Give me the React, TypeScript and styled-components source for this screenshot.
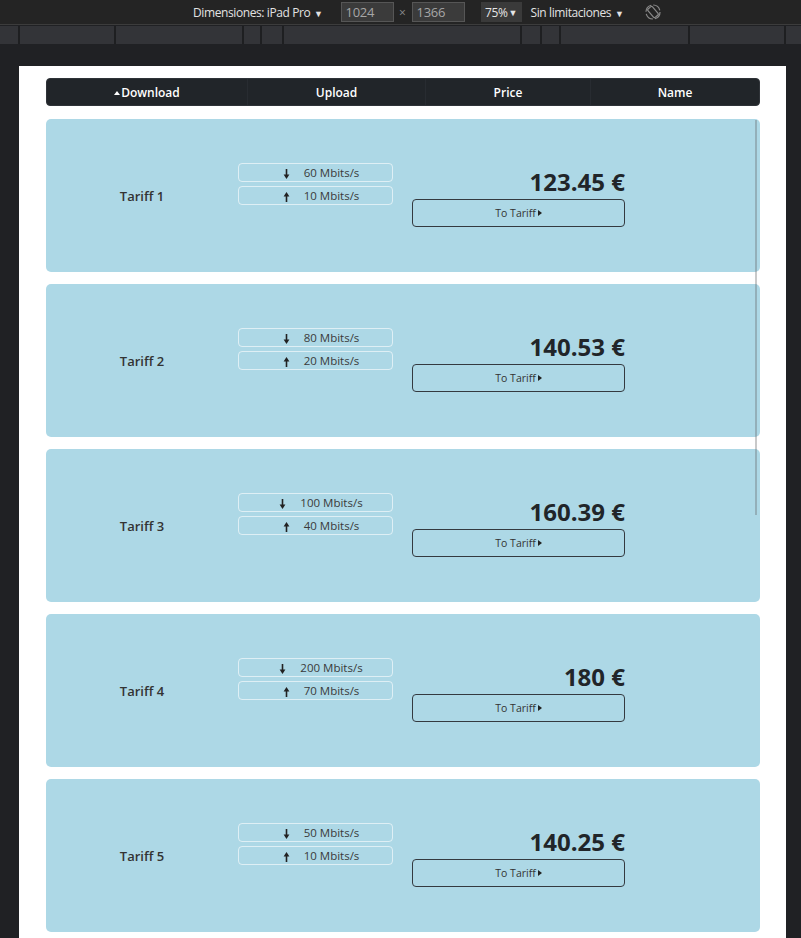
import styled, { createGlobalStyle } from "styled-components";

const tariffs = [
  { name: "Tariff 1", down: 60, up: 10, price: "123.45 €" },
  { name: "Tariff 2", down: 80, up: 20, price: "140.53 €" },
  { name: "Tariff 3", down: 100, up: 40, price: "160.39 €" },
  { name: "Tariff 4", down: 200, up: 70, price: "180 €" },
  { name: "Tariff 5", down: 50, up: 10, price: "140.25 €" },
];

// widths of the ruler segments under the device toolbar
const rulerSegments = [20, 96, 128, 18, 22, 238, 20, 19, 129, 96];

const columns = ["Download", "Upload", "Price", "Name"];

export default function App() {
  return (
    <>
      <GlobalStyle />
      <Toolbar>
        <ToolText>
          Dimensiones: iPad Pro <Caret>▼</Caret>
        </ToolText>
        <SizeInput style={{ marginLeft: 18 }}>1024</SizeInput>
        <Times>×</Times>
        <SizeInput>1366</SizeInput>
        <ZoomBox>
          75% <Caret>▼</Caret>
        </ZoomBox>
        <ToolText style={{ marginLeft: 9 }}>
          Sin limitaciones <Caret>▼</Caret>
        </ToolText>
        <RotateIcon />
      </Toolbar>
      <Ruler>
        {rulerSegments.map((w, i) => (
          <RulerSegment key={i} $width={w} />
        ))}
        <RulerRest />
      </Ruler>

      <Viewport>
        <Page>
          <TableHead>
            {columns.map((c, i) => (
              <HeadCell key={c} $first={i === 0}>
                {i === 0 && <SortUp />}
                {c}
              </HeadCell>
            ))}
          </TableHead>

          <CardList>
            {tariffs.map((t) => (
              <Card key={t.name}>
                <TariffName>{t.name}</TariffName>
                <Speeds>
                  <Speed>
                    <Arrow dir="down" />
                    <span>{t.down} Mbits/s</span>
                  </Speed>
                  <Speed>
                    <Arrow dir="up" />
                    <span>{t.up} Mbits/s</span>
                  </Speed>
                </Speeds>
                <PriceCol>
                  <Price>{t.price}</Price>
                  <TariffButton>
                    To Tariff
                    <PlayCaret />
                  </TariffButton>
                </PriceCol>
              </Card>
            ))}
            <ScrollThumb />
          </CardList>
        </Page>
      </Viewport>
    </>
  );
}

function Arrow({ dir }: { dir: "up" | "down" }) {
  return (
    <ArrowSvg width="7" height="10" viewBox="0 0 7 10" $up={dir === "up"}>
      <line x1="3.5" y1="0" x2="3.5" y2="6.5" stroke="#222" strokeWidth="1.6" />
      <polygon points="0.6,5.6 6.4,5.6 3.5,10" fill="#222" />
    </ArrowSvg>
  );
}

function RotateIcon() {
  return (
    <RotateSvg width="16" height="18" viewBox="0 0 16 18">
      <circle cx="8" cy="9" r="7" fill="none" stroke="#8a8a8a" strokeWidth="1.2" strokeDasharray="9 2" />
      <rect
        x="5"
        y="3.5"
        width="6"
        height="11"
        rx="1.2"
        fill="none"
        stroke="#8a8a8a"
        strokeWidth="1.2"
        transform="rotate(-40 8 9)"
      />
    </RotateSvg>
  );
}

/* ============================= STYLES ============================= */

const GlobalStyle = createGlobalStyle`
  html, body {
    margin: 0;
    padding: 0;
    overflow: hidden;
    background: #202124;
    font-family: "Open Sans", "Noto Sans", sans-serif;
  }
  * { box-sizing: border-box; }
`;

const Toolbar = styled.div`
  height: 25px;
  display: flex;
  align-items: center;
  padding-left: 193px;
  background: #242424;
  border-bottom: 1px solid #3c3c3c;
`;

const ToolText = styled.span`
  color: #e2e2e2;
  font-size: 12px;
  letter-spacing: -0.4px;
  white-space: nowrap;
`;

const Caret = styled.span`
  font-size: 9px;
  margin-left: 1px;
`;

const SizeInput = styled.div`
  width: 53px;
  height: 20px;
  padding-left: 4px;
  display: flex;
  align-items: center;
  background: #3b3b3b;
  border: 1px solid #565656;
  color: #a6a6a6;
  font-size: 13px;
  letter-spacing: -0.3px;
`;

const Times = styled.span`
  width: 18px;
  text-align: center;
  color: #8c8c8c;
  font-size: 12px;
`;

const ZoomBox = styled.div`
  margin-left: 16px;
  width: 41px;
  height: 20px;
  display: flex;
  align-items: center;
  justify-content: center;
  background: #3a3a3a;
  color: #e6e6e6;
  font-size: 12px;
  letter-spacing: -0.4px;
`;

const RotateSvg = styled.svg`
  margin-left: 22px;
`;

const Ruler = styled.div`
  height: 18px;
  margin-top: 1px;
  display: flex;
  background: #333438;
`;

const RulerSegment = styled.div<{ $width: number }>`
  width: ${(p) => p.$width}px;
  flex-shrink: 0;
  border-right: 2px solid #1e1f21;
`;

const RulerRest = styled.div`
  flex: 1;
`;

const Viewport = styled.div`
  padding: 22px 15px 0 19px;
`;

const Page = styled.div`
  background: #fff;
  padding: 12px 26px 20px 27px;
`;

const TableHead = styled.div`
  display: grid;
  grid-template-columns: 200px 178px 165px 1fr;
  height: 28px;
  background: #212529;
  border: 1px solid #2f3338;
  border-radius: 4px;
  overflow: hidden;
`;

const HeadCell = styled.div<{ $first: boolean }>`
  display: flex;
  align-items: center;
  justify-content: center;
  color: #fff;
  font-size: 12px;
  font-weight: 600;
  border-left: ${(p) => (p.$first ? "none" : "1px solid #282c31")};
`;

const SortUp = styled.span`
  width: 0;
  height: 0;
  margin-right: 1px;
  margin-top: 1px;
  border-left: 3.5px solid transparent;
  border-right: 3.5px solid transparent;
  border-bottom: 4px solid #fff;
`;

const CardList = styled.div`
  position: relative;
  margin-top: 13px;
  display: flex;
  flex-direction: column;
  gap: 12px;
`;

const Card = styled.div`
  height: 153px;
  display: grid;
  grid-template-columns: 192px 174px 213px;
  background: #add8e6;
  border-radius: 5px;
`;

const TariffName = styled.div`
  align-self: center;
  text-align: center;
  color: #333;
  font-size: 13px;
  font-weight: 600;
`;

const Speeds = styled.div`
  width: 155px;
  margin-top: 44px;
  display: flex;
  flex-direction: column;
  gap: 4px;
`;

const Speed = styled.div`
  height: 19px;
  padding-left: 11px;
  display: flex;
  align-items: center;
  justify-content: center;
  gap: 14px;
  border: 1px solid rgba(255, 255, 255, 0.6);
  border-radius: 4px;
  color: #3a3a3a;
  font-size: 11.5px;
`;

const ArrowSvg = styled.svg<{ $up: boolean }>`
  margin-top: 3px;
  transform: ${(p) => (p.$up ? "rotate(180deg)" : "none")};
`;

const PriceCol = styled.div`
  margin-top: 49px;
  display: flex;
  flex-direction: column;
`;

const Price = styled.div`
  text-align: right;
  color: #212529;
  font-size: 24px;
  font-weight: 700;
  line-height: 28.8px;
`;

const TariffButton = styled.button`
  margin-top: 2px;
  height: 28px;
  display: flex;
  align-items: center;
  justify-content: center;
  background: transparent;
  border: 1px solid #343a40;
  border-radius: 4px;
  color: #333;
  font-family: inherit;
  font-size: 10.5px;
  cursor: pointer;
`;

const PlayCaret = styled.span`
  width: 0;
  height: 0;
  margin-left: 2px;
  border-top: 3.5px solid transparent;
  border-bottom: 3.5px solid transparent;
  border-left: 4px solid #222;
`;

const ScrollThumb = styled.div`
  position: absolute;
  top: 1px;
  right: 3px;
  width: 2px;
  height: 395px;
  background: rgba(100, 100, 100, 0.35);
`;
